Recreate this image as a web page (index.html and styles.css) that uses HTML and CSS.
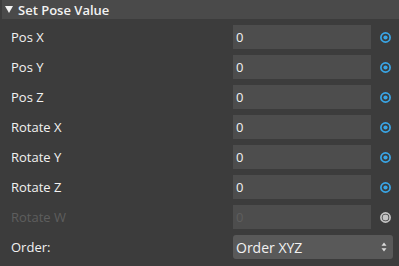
FILE: index.html
```html
<!DOCTYPE html>
<html lang="en">
<head>
  <meta charset="UTF-8">
  <title>Set Pose Value</title>
  <link rel="stylesheet" href="styles.css">
</head>
<body>
  <div class="panel">
    <header class="panel-head">
      <svg class="caret" viewBox="0 0 8 7"><path d="M0 0 H8 L4 7 Z" /></svg>
      <span class="title">Set Pose Value</span>
    </header>
    <div class="fields">
      <div class="row">
        <span class="label">Pos X</span>
        <div class="input">0</div>
        <span class="pin"><svg viewBox="0 0 11 11"><circle cx="5.5" cy="5.5" r="4.6" /><circle cx="5.5" cy="5.5" r="2.1" class="dot" /></svg></span>
      </div>
      <div class="row">
        <span class="label">Pos Y</span>
        <div class="input">0</div>
        <span class="pin"><svg viewBox="0 0 11 11"><circle cx="5.5" cy="5.5" r="4.6" /><circle cx="5.5" cy="5.5" r="2.1" class="dot" /></svg></span>
      </div>
      <div class="row">
        <span class="label">Pos Z</span>
        <div class="input">0</div>
        <span class="pin"><svg viewBox="0 0 11 11"><circle cx="5.5" cy="5.5" r="4.6" /><circle cx="5.5" cy="5.5" r="2.1" class="dot" /></svg></span>
      </div>
      <div class="row">
        <span class="label">Rotate X</span>
        <div class="input">0</div>
        <span class="pin"><svg viewBox="0 0 11 11"><circle cx="5.5" cy="5.5" r="4.6" /><circle cx="5.5" cy="5.5" r="2.1" class="dot" /></svg></span>
      </div>
      <div class="row">
        <span class="label">Rotate Y</span>
        <div class="input">0</div>
        <span class="pin"><svg viewBox="0 0 11 11"><circle cx="5.5" cy="5.5" r="4.6" /><circle cx="5.5" cy="5.5" r="2.1" class="dot" /></svg></span>
      </div>
      <div class="row">
        <span class="label">Rotate Z</span>
        <div class="input">0</div>
        <span class="pin"><svg viewBox="0 0 11 11"><circle cx="5.5" cy="5.5" r="4.6" /><circle cx="5.5" cy="5.5" r="2.1" class="dot" /></svg></span>
      </div>
      <div class="row disabled">
        <span class="label">Rotate W</span>
        <div class="input">0</div>
        <span class="pin"><svg viewBox="0 0 11 11"><circle cx="5.5" cy="5.5" r="4.6" /><circle cx="5.5" cy="5.5" r="2.1" class="dot" /></svg></span>
      </div>
      <div class="row">
        <span class="label">Order:</span>
        <div class="select">
          <span>Order XYZ</span>
          <svg class="arrows" viewBox="0 0 6 10"><path d="M3 0.5 L5.5 3.8 L0.5 3.8 Z" /><path d="M3 9.5 L5.5 6.2 L0.5 6.2 Z" /></svg>
        </div>
      </div>
    </div>
  </div>
</body>
</html>
```

FILE: styles.css
```css
body {
  margin: 0;
  background-color: #3c3c3c;
  font-family: "Open Sans", "Noto Sans", sans-serif;
  font-size: 13px;
  color: #f2f2f2;
}
.panel {
  width: 399px;
  height: 266px;
  background-color: #3c3c3c;
  overflow: hidden;
}
.panel-head {
  height: 19px;
  margin-left: 2px;
  padding-left: 3px;
  background-color: #4a4a4a;
  display: flex;
  align-items: center;
  font-weight: 600;
  font-size: 13px;
}
.caret {
  width: 8px;
  height: 7px;
  fill: #f2f2f2;
  margin-right: 5px;
}
.fields {
  padding-top: 6px;
  display: flex;
  flex-direction: column;
  gap: 6px;
}
.row {
  display: grid;
  grid-template-columns: 222px 138px 1fr;
  height: 24px;
  padding-left: 11px;
  align-items: center;
}
.input {
  height: 24px;
  line-height: 24px;
  background-color: #4d4d4d;
  padding-left: 3px;
  box-sizing: border-box;
}
.pin {
  display: flex;
  justify-content: center;
}
.pin svg {
  width: 11px;
  height: 11px;
}
.pin circle {
  fill: none;
  stroke: #39a6e6;
  stroke-width: 1.7;
}
.pin .dot {
  fill: #39a6e6;
  stroke: none;
}
.disabled .label,
.disabled .input {
  color: #5e5e5e;
}
.disabled .pin circle {
  stroke: #c4c4c4;
}
.disabled .pin .dot {
  fill: #c4c4c4;
}
.select {
  grid-column: 2 / 4;
  margin-right: 6px;
  height: 24px;
  background-color: #595959;
  border-radius: 3px;
  display: flex;
  align-items: center;
  justify-content: space-between;
  padding: 0 6px 0 3px;
  font-size: 14px;
}
.arrows {
  width: 6px;
  height: 10px;
  fill: #dcdcdc;
}
```
